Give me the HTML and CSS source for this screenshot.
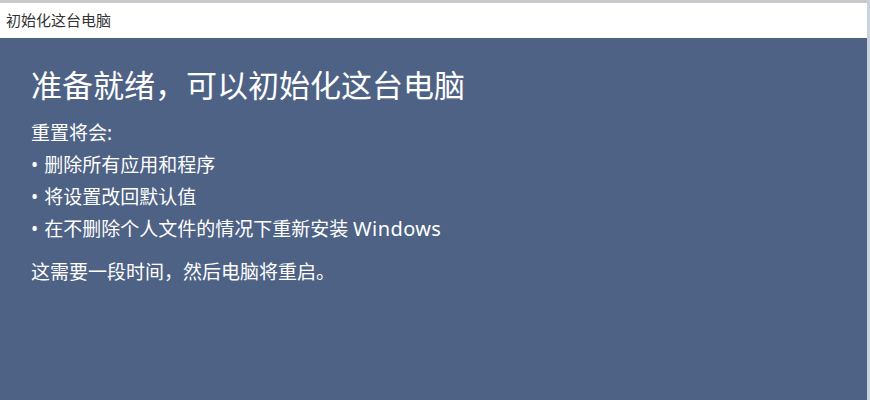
FILE: index.html
```html
<!DOCTYPE html>
<html lang="zh-CN">
<head>
    <meta charset="UTF-8">
    <meta name="viewport" content="width=device-width, initial-scale=1.0">
    <title>初始化这台电脑</title>
    <link rel="stylesheet" href="styles.css">
</head>
<body>
    <div class="janela">
        <div class="titulo">初始化这台电脑</div>
        <div class="conteudo">
            <h1>准备就绪，可以初始化这台电脑</h1>
            <p class="intro">重置将会:</p>
            <ul class="lista">
                <li>删除所有应用和程序</li>
                <li>将设置改回默认值</li>
                <li>在不删除个人文件的情况下重新安装 <span class="latim">Windows</span></li>
            </ul>
            <p class="aviso">这需要一段时间，然后电脑将重启。</p>
        </div>
    </div>
</body>
</html>
```

FILE: styles.css
```css
html, body {
    margin: 0;
    height: 100%;
}
body {
    font-family: "Segoe UI", "Noto Sans", "Noto Sans CJK SC", sans-serif;
    background-color: #4e6285;
}
.janela {
    display: flex;
    flex-direction: column;
    height: 100%;
    border-right: 3px solid #c9d3dc;
}
.titulo {
    height: 35px;
    line-height: 34px;
    border-top: 3px solid #c8c8cc;
    background-color: #ffffff;
    color: #333333;
    font-size: 15px;
    padding-left: 6px;
}
.conteudo {
    flex: 1;
    padding: 27px 0 0 31px;
    color: #ffffff;
}
.conteudo > h1 {
    margin: 0;
    font-size: 31px;
    font-weight: normal;
    line-height: 40px;
}
.intro {
    margin: 12px 0 0;
    font-size: 19px;
    line-height: 32px;
}
.lista {
    list-style: none;
    margin: 0;
    padding: 0;
    font-size: 19px;
    line-height: 32px;
}
.lista li::before {
    content: "•";
    margin-right: 6px;
}
.latim {
    font-size: 20px;
    letter-spacing: 0.4px;
}
.aviso {
    margin: 11px 0 0;
    font-size: 19px;
    line-height: 32px;
}
```
